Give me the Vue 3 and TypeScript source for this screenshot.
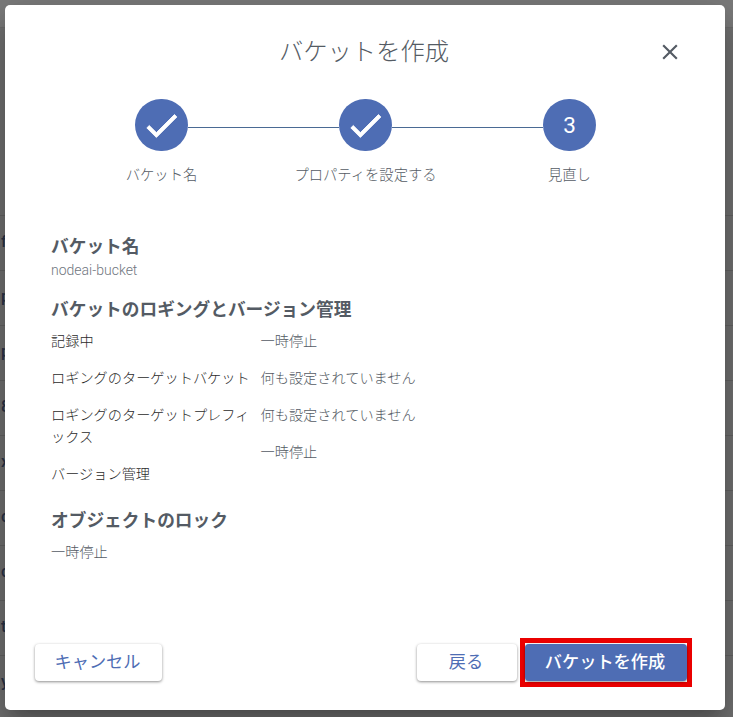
<script setup lang="ts">
const bgRows = ['f', 'p', 'p', '8', 'x', 'c', 'c', 't', 'y']
const steps = [
  { label: 'バケット名', done: true },
  { label: 'プロパティを設定する', done: true },
  { label: '見直し', done: false, n: 3 },
]
</script>

<template>
  <div class="page">
    <div class="bg-band"></div>
    <div class="bg-list">
      <div v-for="(r, i) in bgRows" :key="i" class="bg-row">{{ r }}</div>
    </div>
    <div class="modal">
      <header class="head">
        <h1>バケットを作成</h1>
        <button class="close" aria-label="閉じる">
          <svg width="26" height="26" viewBox="0 0 24 24"><path d="M19 6.41 17.59 5 12 10.59 6.41 5 5 6.41 10.59 12 5 17.59 6.41 19 12 13.41 17.59 19 19 17.59 13.41 12z" fill="#545b64" /></svg>
        </button>
      </header>
      <div class="stepper">
        <template v-for="(s, i) in steps" :key="i">
          <div class="step">
            <div class="dot">
              <svg v-if="s.done" width="41" height="41" viewBox="0 0 24 24"><path d="M9 16.17 4.83 12l-1.42 1.41L9 19 21 7l-1.41-1.41z" fill="#fff" stroke="#fff" stroke-width="0.5" /></svg>
              <span v-else>{{ s.n }}</span>
            </div>
            <div class="step-label">{{ s.label }}</div>
          </div>
          <div v-if="i < steps.length - 1" class="line"></div>
        </template>
      </div>
      <section class="body">
        <h2>バケット名</h2>
        <p class="name">nodeai-bucket</p>
        <h2 class="second">バケットのロギングとバージョン管理</h2>
        <div class="cols">
          <div class="col-l">
            <div class="l">記録中</div>
            <div class="l">ロギングのターゲットバケット</div>
            <div class="l">ロギングのターゲットプレフィックス</div>
            <div class="l">バージョン管理</div>
          </div>
          <div class="col-r">
            <div class="v">一時停止</div>
            <div class="v">何も設定されていません</div>
            <div class="v">何も設定されていません</div>
            <div class="v">一時停止</div>
          </div>
        </div>
        <h2 class="third">オブジェクトのロック</h2>
        <p class="lock">一時停止</p>
      </section>
      <footer class="foot">
        <button class="btn">キャンセル</button>
        <div class="right">
          <button class="btn back">戻る</button>
          <div class="hl"><button class="btn primary">バケットを作成</button></div>
        </div>
      </footer>
    </div>
  </div>
</template>

<style>
html, body { margin: 0; padding: 0; }
</style>

<style scoped>
.page {
  position: relative;
  width: 733px;
  height: 717px;
  overflow: hidden;
  background: #727272;
  font-family: Roboto, "Noto Sans CJK JP", sans-serif;
}
.bg-band {
  position: absolute;
  left: 0;
  right: 0;
  top: 0;
  height: 27px;
  background: #7b7b7b;
  border-bottom: 1px solid #6d6d6d;
}
.bg-list { position: absolute; left: 0; top: 215px; width: 100%; }
.bg-row {
  box-sizing: border-box;
  height: 55px;
  padding: 14px 0 0 1px;
  border-top: 1px solid #646464;
  color: #2a3348;
  font-size: 16px;
  line-height: 24px;
  font-weight: 500;
}
.modal {
  position: absolute;
  left: 5px;
  top: 5px;
  width: 720px;
  height: 705px;
  background: #fff;
  border-radius: 5px;
  display: flex;
  flex-direction: column;
  box-sizing: border-box;
  box-shadow: 0 11px 15px -7px rgba(0,0,0,.2), 0 24px 38px 3px rgba(0,0,0,.14), 0 9px 46px 8px rgba(0,0,0,.12);
}
.head { position: relative; height: 82px; flex: none; }
.head h1 {
  margin: 0;
  padding: 30px 2px 0 0;
  text-align: center;
  font-size: 24.3px;
  line-height: 34px;
  font-weight: 300;
  color: #545b64;
}
.close {
  position: absolute;
  left: 652px;
  top: 34px;
  padding: 0;
  width: 26px;
  height: 26px;
  border: 0;
  background: none;
}
.stepper {
  display: flex;
  align-items: flex-start;
  height: 148px;
  flex: none;
  padding: 12px 0 0 130.3px;
  box-sizing: border-box;
}
.step { width: 52.4px; flex: none; display: flex; flex-direction: column; align-items: center; }
.dot {
  width: 52.4px;
  height: 52.4px;
  flex: none;
  border-radius: 50%;
  background: #4e6db4;
  display: flex;
  align-items: center;
  justify-content: center;
  color: #fff;
  font-size: 22.5px;
}
.step-label {
  white-space: nowrap;
  margin-top: 14px;
  font-size: 14.3px;
  line-height: 20px;
  font-weight: 300;
  color: #545b64;
}
.line { width: 151.6px; flex: none; height: 1px; margin-top: 28px; background: #4a6a94; }
.body { padding: 0 46px; flex: 1; color: #545b64; }
h2 {
  margin: 0;
  font-size: 17.7px;
  line-height: 24px;
  font-weight: 700;
  color: #545b64;
}
.name {
  margin: 1px 0 0;
  font-size: 14px;
  line-height: 20px;
  font-weight: 300;
  color: #6f7680;
}
.second { margin-top: 18px; }
.cols { display: flex; margin-top: 8px; font-size: 14.2px; line-height: 22px; font-weight: 300; }
.col-l { width: 209.5px; flex: none; color: #2b2b2b; }
.col-l .l { padding-right: 8px; margin-bottom: 15px; }
.col-r { color: #545b64; }
.col-r .v { margin-bottom: 15px; }
.third { margin-top: 9px; }
.lock { margin: 8px 0 0; font-size: 14.2px; line-height: 22px; font-weight: 300; color: #545b64; }
.foot {
  flex: none;
  height: 66px;
  display: flex;
  justify-content: space-between;
  padding: 0 33px 0 30px;
  align-items: flex-start;
}
.right { display: flex; align-items: flex-start; gap: 3px; }
.btn {
  height: 36.5px;
  width: 127px;
  padding: 0 2px 4px 0;
  border: 0;
  border-radius: 4px;
  background: #fff;
  color: #4e6db4;
  font-family: inherit;
  font-size: 17.2px;
  font-weight: 400;
  box-shadow: 0 1px 3px rgba(0,0,0,.45);
}
.back { width: 100px; }
.hl { border: 5px solid #ea0000; margin-top: -6px; padding: 1px 0; display: flex; }
.primary { width: 162px; background: #4e6db4; color: #fff; font-weight: 500; }
</style>
